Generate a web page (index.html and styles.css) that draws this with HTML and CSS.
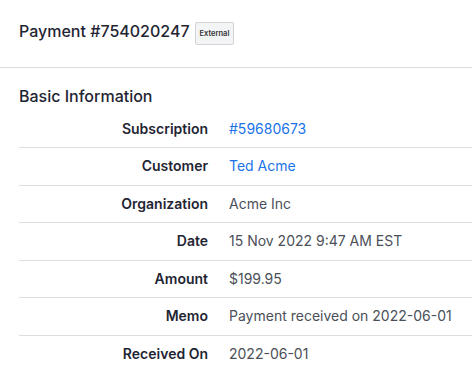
FILE: index.html
```html
<!DOCTYPE html>
<html lang="en">
<head>
  <meta charset="UTF-8">
  <meta name="viewport" content="width=device-width, initial-scale=1.0">
  <title>Payment #754020247</title>
  <link rel="stylesheet" href="styles.css">
</head>
<body>
  <div class="page-header">
    <h1>Payment #754020247</h1>
    <span class="badge">External</span>
  </div>

  <div class="section">
    <h2>Basic Information</h2>
    <div class="details">
      <div class="row">
        <span class="label">Subscription</span>
        <span class="value"><a href="#">#59680673</a></span>
      </div>
      <div class="row">
        <span class="label">Customer</span>
        <span class="value"><a href="#">Ted Acme</a></span>
      </div>
      <div class="row">
        <span class="label">Organization</span>
        <span class="value">Acme Inc</span>
      </div>
      <div class="row">
        <span class="label">Date</span>
        <span class="value">15 Nov 2022 9:47 AM EST</span>
      </div>
      <div class="row">
        <span class="label">Amount</span>
        <span class="value">$199.95</span>
      </div>
      <div class="row">
        <span class="label">Memo</span>
        <span class="value">Payment received on 2022-06-01</span>
      </div>
      <div class="row">
        <span class="label">Received On</span>
        <span class="value">2022-06-01</span>
      </div>
    </div>
  </div>
</body>
</html>
```

FILE: styles.css
```css
body {
  font-family: Inter, "Noto Sans", sans-serif;
  margin: 0;
  padding: 0;
  background-color: #fff;
  color: #1f2533;
}
.page-header {
  display: flex;
  align-items: flex-start;
  gap: 5px;
  padding: 18px 19px 22px;
  border-bottom: 1px solid #dcdcdc;
}
.page-header h1 {
  margin: 0;
  font-size: 16px;
  font-weight: 500;
  line-height: 26px;
}
.badge {
  margin-top: 4px;
  padding: 0 4px;
  height: 21px;
  line-height: 21px;
  font-size: 7.5px;
  font-weight: 600;
  color: #333;
  background-color: #f3f4f6;
  border: 1px solid #d4d4d8;
  border-radius: 2px;
}
.section {
  padding-left: 19px;
}
.section h2 {
  margin: 0;
  padding: 16px 0 2.5px;
  font-size: 16px;
  font-weight: 500;
  line-height: 24px;
}
.row {
  display: grid;
  grid-template-columns: 189px 1fr;
  column-gap: 21px;
  padding: 8px 0;
  line-height: 20.5px;
  font-size: 14px;
  border-bottom: 1px solid #dedede;
}
.label {
  text-align: right;
  font-weight: 600;
  color: #1f2533;
}
.value {
  color: #4b5058;
}
.value a {
  color: #1a73e8;
  text-decoration: none;
}
```
